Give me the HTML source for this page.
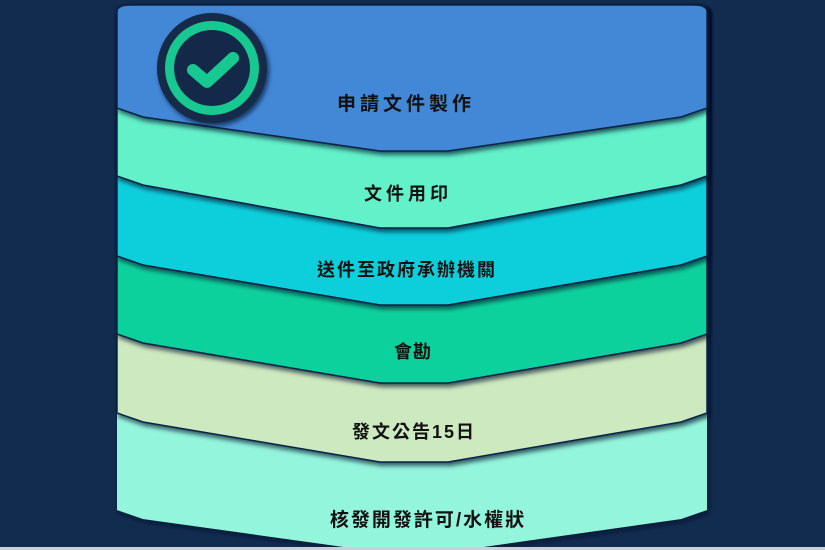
<!DOCTYPE html>
<html><head><meta charset="utf-8"><style>
html,body{margin:0;padding:0;background:#122c4f;width:825px;height:550px;overflow:hidden}
svg{display:block}
text{font-family:"Liberation Sans","Noto Sans CJK TC",sans-serif;font-weight:bold;fill:#111;text-anchor:middle}
</style></head><body>
<svg width="825" height="550" viewBox="0 0 825 550">
<defs>
<filter id="sh" x="-10%" y="-10%" width="120%" height="130%"><feDropShadow dx="2" dy="3" stdDeviation="2.5" flood-color="#061528" flood-opacity="0.7"/></filter>
</defs>
<rect width="825" height="550" fill="#122c4f"/>
<path filter="url(#sh)" d="M117,12 Q117,5 130,5 L694,5 Q707,5 707,12 L707,510 L681,519 L448,552 L380,552 L143,519 L117,510 Z" fill="#93f5dc"/>
<path filter="url(#sh)" d="M117,12 Q117,5 130,5 L694,5 Q707,5 707,12 L707,413 L681,422 L448,462 L380,462 L143,422 L117,413 Z" fill="#cde9c0" stroke="#0d2346" stroke-width="1.5"/>
<path filter="url(#sh)" d="M117,12 Q117,5 130,5 L694,5 Q707,5 707,12 L707,334 L681,343 L448,383 L380,383 L143,343 L117,334 Z" fill="#10d19c" stroke="#0d2346" stroke-width="1.5"/>
<path filter="url(#sh)" d="M117,12 Q117,5 130,5 L694,5 Q707,5 707,12 L707,256 L681,265 L448,305 L380,305 L143,265 L117,256 Z" fill="#0dcfdc" stroke="#0d2346" stroke-width="1.5"/>
<path filter="url(#sh)" d="M117,12 Q117,5 130,5 L694,5 Q707,5 707,12 L707,176 L681,185 L448,228 L380,228 L143,185 L117,176 Z" fill="#62f1c9" stroke="#0d2346" stroke-width="1.5"/>
<path filter="url(#sh)" d="M117,12 Q117,5 130,5 L694,5 Q707,5 707,12 L707,108 L681,117 L448,151 L380,151 L143,117 L117,108 Z" fill="#4388d7" stroke="#0d2346" stroke-width="1.5"/>
<circle cx="212" cy="68" r="55" fill="#14294a" filter="url(#sh)"/>
<circle cx="212" cy="68" r="47" fill="#17c990"/>
<circle cx="212" cy="68" r="38" fill="#14294a"/>
<path d="M193,70 L207,82 L233,58" fill="none" stroke="#17c990" stroke-width="12" stroke-linecap="round" stroke-linejoin="round"/>
<text x="406" y="110" font-size="19" letter-spacing="4">申請文件製作</text>
<text x="408" y="200" font-size="18" letter-spacing="4">文件用印</text>
<text x="407" y="276" font-size="18" letter-spacing="2">送件至政府承辦機關</text>
<text x="413" y="358" font-size="18" letter-spacing="1">會勘</text>
<text x="414" y="438" font-size="18" letter-spacing="2">發文公告15日</text>
<text x="428" y="526" font-size="19" letter-spacing="2">核發開發許可/水權狀</text>
<rect x="0" y="547" width="825" height="3" fill="#c9d0dc"/>
</svg>
</body></html>
